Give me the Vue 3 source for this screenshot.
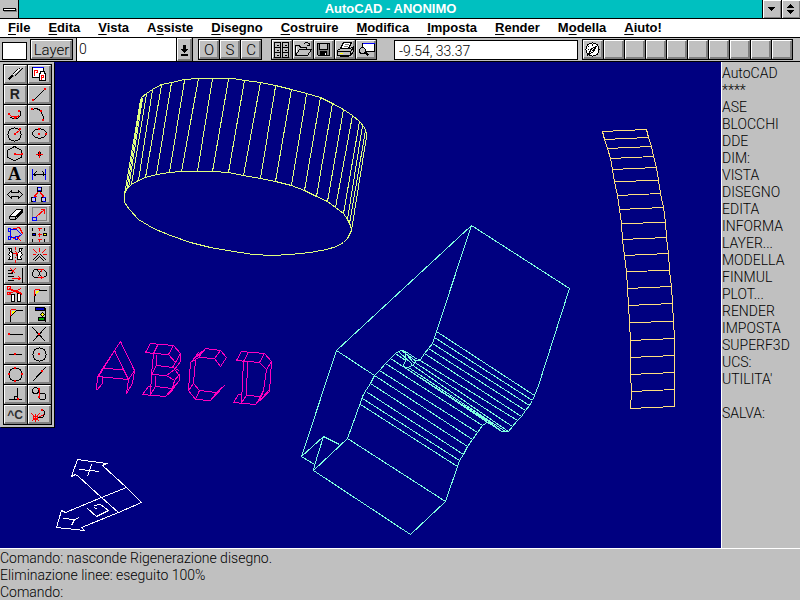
<script setup>
import { ref } from 'vue'

const menus = [
  ['', 'F', 'ile'], ['', 'E', 'dita'], ['', 'V', 'ista'], ['A', 's', 'siste'], ['', 'D', 'isegno'],
  ['', 'C', 'ostruire'], ['', 'M', 'odifica'], ['', 'I', 'mposta'], ['', 'R', 'ender'],
  ['M', 'o', 'della'], ['', 'A', 'iuto!']
]

const screenMenu = [
  'AutoCAD', '****', 'ASE', 'BLOCCHI', 'DDE', 'DIM:', 'VISTA', 'DISEGNO', 'EDITA', 'INFORMA',
  'LAYER...', 'MODELLA', 'FINMUL', 'PLOT...', 'RENDER', 'IMPOSTA', 'SUPERF3D', 'UCS:', "UTILITA'", '', 'SALVA:'
]

const layer = ref('0')
const coords = ref('-9.54, 33.37')
const command = ref('')

const K = '#000', R = '#f00', B = '#00f', W = '#fff', G = '#808080', Y = '#ff0', N = '#c0c0c0'

// Icons are drawn in thirds of a pixel; centre() moves a coordinate to the middle of its pixel.
const centre = n => Math.floor(n / 3) * 3 + 1.5
const s = (d, c = K, f = 'none', w = 3) => ({
  d: /[a-y]/.test(d) ? d : d.replace(/\d+/g, n => centre(Number(n))), c, f, w
})
const dot = (x, y, c = R) => s(`M${Math.round(x / 3) * 3 - 3} ${Math.round(y / 3) * 3 - 3}h6v6h-6z`, 'none', c)
const ring = (x, y, rx, ry = rx) => `M${centre(x) - rx} ${centre(y)}a${rx} ${ry} 0 1 0 ${rx * 2} 0a${rx} ${ry} 0 1 0 ${-rx * 2} 0z`

const palette = [
  { name: 'Ridisegna', art: [s('M12 43L27 28', K, 'none', 6), s('M24 27L48 6M30 33L54 9'), s('M27 27L51 6', W), s('M30 30L51 9', G), s('M24 27L30 36', G)] },
  { name: 'Oggetti', art: [s('M13 7H46V37H13z', K, W), s('M13 7H46', B), s('M20 31V16H28V23H21', R), s('M34 24H52V45H34z', K, W), s('M36 24V20H50V24', K, W), s('M40 42V31H47V37H41', R)] },
  { name: 'Ripeti', text: 'R', cls: 'glyph-r', x: 17, y: 43 },
  { name: 'Linea', art: [s('M15 45L52 11'), dot(15, 45), dot(52, 11)] },
  { name: 'Polilinea', art: [s('M18 36L27 41H39L49 32V23L45 17'), s('M15 28L21 35H34M34 38L46 30', R), dot(16, 28), dot(45, 17), dot(34, 38)] },
  { name: 'Arco', art: [s('M13 12Q31 8 38 20Q46 28 46 46'), dot(13, 12), dot(38, 17), dot(46, 46)] },
  { name: 'Cerchio', art: [s(ring(32, 27, 20)), s('M32 27L48 12', R), dot(32, 27), dot(48, 12)] },
  { name: 'Ellisse', art: [s(ring(33, 26, 21, 14)), dot(33, 26), dot(54, 26), dot(33, 12)] },
  { name: 'Poligono', art: [s('M31 5L51 15V37L31 47L11 37V15z'), s('M31 27H51', R), dot(32, 28), dot(53, 28)] },
  { name: 'Punto', art: [s('M33 20L39 27L33 34L27 27z'), s('M22 27H44M33 16V38', R)] },
  { name: 'Testo', text: 'A', cls: 'glyph-a', x: 12, y: 46 },
  { name: 'Dimensione', art: [s('M13 10V43M53 10V43', B), s('M15 27H51M24 20L17 27L24 34M42 20L49 27L42 34')] },
  { name: 'Estendi', art: [s('M10 27L22 15V21H44V15L56 27L44 39V33H22V39z')] },
  { name: 'Copia', art: [s('M32 18L19 33M34 18L46 33M19 27V33H26M46 27V33H40', R), s(ring(33, 12, 7), K, '#c0c0ff'), s('M27 7H37M27 17H37', B), s(ring(17, 43, 7), K, '#c0c0ff'), s('M12 38H22M12 48H22', B), s(ring(47, 43, 7), K, '#c0c0ff'), s('M42 38H52M42 48H52', B)] },
  { name: 'Cancella', art: [s('M15 33L36 12H54L34 33z', K, W), s('M15 33V40L18 43H33L54 21V12', K), s('M34 33V42'), s('M37 37L52 20', K, 'none', 6)] },
  { name: 'Scala', art: [s('M13 34V7H54V45H26', G), s('M13 36H24V46H13z', B), s('M25 34L48 14M38 14H48V24', R)] },
  { name: 'Modifica polilinea', art: [s('M18 14L45 8L54 24L38 42L18 33z', R), s('M18 14H36L51 27L36 38H18z', B), s('M12 10H20V18H12zM12 34H20V42H12zM33 34H41V42H33z', B, N), s('M40 38L51 50', R)] },
  { name: 'Serie', art: [s('M14 7V15M14 40V48M50 7V15M50 40V48', K), s('M12 24H21V32H12z', K, B), s('M45 24H54V32H45z', K, Y), s('M27 11H39M33 6V17M27 28H39M33 22V34M27 44H39M33 39V50', R)] },
  { name: 'Specchio', art: [s('M13 10H21V20L26 25V44H14L18 35L13 28L18 20z', K, W), s('M54 10H46V20L41 25V44H53L49 35L54 28L49 20z', K, W), s('M33 5V12M33 15V20M33 33V38M33 42V52', R), s('M25 25H41M37 20V30', R)] },
  { name: 'Esplodi', art: [s('M12 45L30 27M18 49L33 33M54 45L36 27M48 49L33 33'), s('M15 12L27 24M51 12L39 24M33 6V18M12 28H22M54 28H44', R)] },
  { name: 'Stira', art: [s('M11 15H24V24H11M11 33H27M11 45H27'), s('M54 7V51'), s('M18 9L34 25M34 9L18 25', R), s('M21 39H48M42 33L48 39L42 45M42 36V42', R)] },
  { name: 'Sposta', art: [s('M20 14H45L54 21V30L45 36H20L12 30V21z'), s('M27 15L33 22V29L27 35M39 15L33 22M39 35L33 29'), s('M27 14H45M40 9V19M27 36H45M40 31V41', R)] },
  { name: 'Taglia', art: [s('M22 27H31V48H22zM41 24H50V48H41z', K, W), s('M15 9L54 24M15 24L51 9M15 12L54 27', R), s('M10 5H18V12H10zM10 21H18V28H10z', R)] },
  { name: 'Raccorda', art: [s('M19 49V36Q24 18 36 16H54'), s('M19 14H33M19 14V30', R), s('M22 18H30M22 21H27M22 24H25', Y)] },
  { name: 'Cima', art: [s('M19 49V34L36 16H54'), s('M19 14H33M19 14V30', R), s('M22 18H30M22 21H27M22 24H25', Y)] },
  { name: 'Proprietà', art: [s('M51 6V49'), s('M21 7H49V15H21z', K, '#0000c0'), s('M42 21L48 27L42 33L36 27z', K, Y), s('M30 38H49V45H30z', K, '#00a000')] },
  { name: 'Fine', art: [s('M15 28H54'), dot(15, 28)] },
  { name: 'Intersezione', art: [s('M13 7L53 48M53 7L13 48'), dot(33, 27)] },
  { name: 'Medio', art: [s('M13 28H53'), dot(33, 28)] },
  { name: 'Centro', art: [s(ring(33, 27, 20)), dot(34, 28)] },
  { name: 'Quadrante', art: [s(ring(33, 27, 20)), dot(34, 8), dot(15, 28), dot(54, 28), dot(34, 48)] },
  { name: 'Vicino', art: [s('M12 48L53 7'), dot(43, 18)] },
  { name: 'Perpendicolare', art: [s('M13 43H53M39 8V43M30 43V33H39'), dot(42, 42)] },
  { name: 'Tangente', art: [s(ring(22, 15, 9)), s(ring(43, 35, 10)), s('M33 13V36', R), dot(33, 12), dot(33, 37)] },
  { name: 'Annulla', text: '^C', cls: 'glyph-c', x: 10, y: 42 },
  { name: 'Nessuno', art: [s('M39 12L50 19V27L42 38H27'), s('M10 25L33 48M33 25L10 48M21 24V50', R), s('M34 33L48 28', R), dot(42, 15), s('M15 33H27V42H15z', R)] }
]

const toolButtons = [
  { name: 'Blocchi', art: [s('M6 8H24V21H6zM6 23H24V36H6zM6 38H24V51H6zM30 8H48V21H30zM30 23H48V36H30zM30 38H48V51H30z', K, N), s('M12 15H18M36 15H42M12 30H18M36 30H42M12 45H18M36 45H42')] },
  { name: 'Apri', art: [s('M6 45V15H18L21 21H39V27'), s('M6 45L18 27H54L42 45z', K, N), s('M30 12L36 6H42L48 12M48 6V15H39'), s('M9 18V33', W)] },
  { name: 'Salva', art: [s('M9 9H46V46H12L9 43z', K, G), s('M15 9H39V27H15z', K, N), s('M18 33H37V46H18z', K, K), s('M33 37V43', W)] },
  { name: 'Stampa', art: [s('M15 24L24 6H48L39 24z', K, W), s('M27 12H41M24 18H38', G), s('M6 30L15 24H45L54 18V33L45 45H6z', K, N), s('M6 33H45V45M45 33L54 21'), s('M12 39H21', Y), s('M12 48H39', K)] },
  { name: 'Zoom', art: [s('M18 9H54V33H18z', K, W), s('M18 9H54', B), s(ring(19, 31, 9), K, N), s('M27 37L36 46', K, 'none', 6)] }
]

const compass = [
  s(ring(27, 29, 20), K, W), s('M15 15V18M12 29H15M15 42H18M27 45V48M39 15V18M45 29H42M39 42H36M27 10V15', K),
  s('M39 18L30 33L15 42L24 24z', K, W), s('M39 18L24 33')
]

// Plots digitised in thirds of a pixel: every vertex lands on a pixel centre.
const plot = (ox, oy, lines) => lines.map(l => 'M' + l.split(' ').map(p => {
  const [x, y] = p.split(',').map(Number)
  return `${ox + Math.floor(x / 3) + 0.5} ${oy + Math.floor(y / 3) + 0.5}`
}).join('L')).join('')

const ladderLeft = '38,35 44,58 52,85 62,115 68,148 74,184 82,226 89,268 95,310 98,357 104,406 110,454 113,505 116,556 119,607 122,661 122,712 122,763 125,814 122,865'
const ladderRight = '170,28 175,52 184,79 190,109 199,142 205,181 211,220 220,262 226,307 229,352 235,400 238,451 244,499 247,550 250,604 253,655 253,706 253,757 253,808 253,859'
const rightSteps = ladderRight.split(' ')
const ladder = [ladderLeft, ladderRight, ...ladderLeft.split(' ').map((p, i) => `${p} ${rightSteps[i]}`)]

const cylinder = [
  '92,112 90,105 95,97 110,85 128,72 155,59 185,52 222,43 265,40 307,40 370,41 403,47 451,53 497,62 545,72 590,86 630,98 667,116 699,133 727,150 749,169 762,188 770,205 770,220',
  '43,400 43,388 48,372 63,357 84,347 107,337 140,327 178,321 215,319 262,319 307,319 355,322 401,331 450,341 497,349 543,360 582,377 620,394 651,409 677,426 700,445 713,464 720,480 723,495 722,503 712,520 700,532 680,543 650,553 600,563 540,569 487,570 430,567 370,560 300,547 240,531 180,511 130,489 85,462 57,432 43,412 43,400',
  '90,107 44,388', '95,99 48,378', '96,99 54,370', '110,88 63,357', '128,72 84,347', '155,60 107,337', '185,52 140,327',
  '222,45 178,321', '265,40 215,319', '307,40 262,319', '354,42 307,319', '403,47 355,322', '451,53 401,331',
  '497,63 450,341', '543,72 497,349', '588,87 543,360', '630,98 582,377', '667,116 620,394', '699,133 651,409',
  '727,150 677,426', '749,170 700,445', '758,182 713,464', '765,195 718,474', '770,215 723,495'
]

const solid = [
  '544,32 139,407 34,724', '544,32 838,219 745,510 733,540 727,557 718,570 706,587 695,603 682,617 668,635 655,648 645,650 635,648 620,637 594,618',
  '544,32 440,350 434,367 427,384 416,400 404,416 392,432 380,437 370,448 355,457 343,457 340,450 347,435 346,410 335,405 325,409 315,415 300,430 285,446 268,465 253,482 240,505 229,523 218,543 212,563 172,671',
  '139,407 253,482', '346,408 383,433', '335,405 380,440', '325,409 368,448', '315,415 347,437', '348,418 372,446',
  '300,430 594,618', '285,446 577,632', '268,465 561,652', '253,482 546,673', '240,505 533,694', '231,531 521,717', '218,549 508,735', '212,567 502,753',
  '440,350 733,540', '434,367 727,557', '427,384 718,570', '416,400 706,587', '404,416 695,603', '385,432 682,617', '378,444 668,635', '365,448 655,648', '355,457 645,650', '343,457 635,648',
  '594,618 577,632 561,652 546,673 533,694 521,717 508,735 502,753 467,859 361,958 69,767 172,671 467,859',
  '34,724 99,663 148,688', '99,663 73,750 69,767', '34,724 72,749'
]

const letters = [
  '154,181 157,138 226,35 267,121 263,160 245,190 249,148 157,138', '209,60 173,115 235,118 209,60', '209,60 160,138', '235,118 249,148 267,121', '173,140 173,160 154,181',
  '324,69 302,67 317,40 386,46 407,71 406,95 388,118 404,135 404,152 361,200 293,193 310,169 318,169', '338,45 324,69 370,74 386,46', '370,74 392,97 407,71',
  '324,69 318,133 316,193 331,170', '333,74 335,105 382,113 392,97', '335,105 318,133 365,137 388,118', '382,113 402,122', '331,136 331,170 383,175 388,152 365,137', '388,152 404,132', '361,200 383,175 404,152', '367,195 388,172',
  '527,60 480,54 443,90 437,96 430,182 452,208 497,212 539,166', '527,60 545,83 527,110 508,86 527,60', '508,86 461,82 480,54', '461,82 443,95', '452,90 445,160 463,182 515,186 539,166', '463,182 452,208', '445,160 430,182', '515,186 497,212', '461,68 443,90',
  '575,92 589,64 659,70 680,95 672,183 630,223 566,217 581,194 588,194', '575,92 643,97 659,70', '610,66 596,94 588,218 604,195', '643,97 663,119 680,95', '663,119 656,180 648,200 604,195 607,97', '648,200 630,223', '651,203 672,178', '656,180 636,218'
]

const ucs = [
  '98,388 185,401 173,407 243,472 290,516 219,547 110,592 118,600 33,591 48,540 62,547 170,503 99,438 90,432 80,440 98,388',
  '243,472 170,503 219,547', '104,418 164,424', '139,403 127,440', '55,566 87,569 104,563', '87,569 79,587',
  '127,535 153,559 189,542 166,522 148,526', '148,532 158,539'
]

const drawing = [
  { name: 'cylinder', d: plot(110, 65, cylinder) },
  { name: 'ladder', d: plot(590, 120, ladder) },
  { name: 'solid', d: plot(290, 215, solid) },
  { name: 'letters', d: plot(45, 330, letters) },
  { name: 'ucs', d: plot(45, 330, ucs) }
]
</script>

<template>
  <div class="window">
    <header class="title">
      <button class="sysmenu" aria-label="Menu di controllo"><span class="sysbar"></span></button>
      <h1>AutoCAD - ANONIMO</h1>
      <button class="winbtn" aria-label="Riduci"><svg width="18" height="18" viewBox="0 0 18 18"><path d="M5 7H12L8.500 11z" /></svg></button>
      <button class="winbtn" aria-label="Ripristina"><svg width="18" height="18" viewBox="0 0 18 18"><path d="M5 8H12L8.500 4zM5 10H12L8.500 14z" /></svg></button>
    </header>

    <nav class="menubar">
      <a v-for="m in menus" :key="m.join('')" href="#">{{ m[0] }}<u>{{ m[1] }}</u>{{ m[2] }}</a>
    </nav>

    <div class="toolbar">
      <button class="swatch" aria-label="Colore"></button>
      <div class="group layer"><button class="cell">Layer</button></div>
      <div class="combo">
        <input v-model="layer" aria-label="Layer corrente" />
        <button class="cell" aria-label="Elenco layer"><svg width="15" height="21" viewBox="0 0 15 21"><path d="M6 6h3v4h3l-4.500 4L3 10h3zM4 15h7v2H4z" /></svg></button>
      </div>
      <div class="group modes">
        <button v-for="c in ['O', 'S', 'C']" :key="c" class="cell">{{ c }}</button>
      </div>
      <div class="group files">
        <button v-for="b in toolButtons" :key="b.name" class="cell" :aria-label="b.name">
          <svg class="ico" viewBox="0 0 60 57"><path v-for="(p, i) in b.art" :key="i" :d="p.d" :stroke="p.c" :fill="p.f" :stroke-width="p.w" /></svg>
        </button>
      </div>
      <input v-model="coords" class="coords" aria-label="Coordinate" />
      <div class="group spare">
        <button class="cell" aria-label="Vista aerea">
          <svg class="ico" viewBox="0 0 60 57"><path v-for="(p, i) in compass" :key="i" :d="p.d" :stroke="p.c" :fill="p.f" :stroke-width="p.w" /></svg>
        </button>
        <button v-for="n in 9" :key="n" class="cell" :aria-label="'Strumento ' + n"></button>
      </div>
    </div>

    <main class="work">
      <section class="canvas">
        <svg class="drawing" viewBox="0 62 721 486" preserveAspectRatio="xMinYMin meet" role="img" aria-label="Disegno">
          <path v-for="p in drawing" :key="p.name" :class="p.name" :d="p.d" />
        </svg>
        <div class="palette">
          <button v-for="t in palette" :key="t.name" class="cell" :aria-label="t.name">
            <svg class="ico" viewBox="0 0 69 57">
              <path v-for="(p, i) in t.art" :key="i" :d="p.d" :stroke="p.c" :fill="p.f" :stroke-width="p.w" />
              <text v-if="t.text" :class="t.cls" :x="t.x" :y="t.y">{{ t.text }}</text>
            </svg>
          </button>
        </div>
      </section>
      <aside class="screenmenu">
        <template v-for="(m, i) in screenMenu" :key="i">
          <button v-if="m">{{ m }}</button>
          <span v-else class="blank"></span>
        </template>
      </aside>
    </main>

    <footer class="command">
      <p>Comando: nasconde Rigenerazione disegno.</p>
      <p>Eliminazione linee: eseguito 100%</p>
      <div class="prompt"><label for="cmd">Comando:</label><input id="cmd" v-model="command" autocomplete="off" /></div>
    </footer>
  </div>
</template>

<style>
body { margin: 0; overflow: hidden; }
</style>

<style scoped>
* { box-sizing: border-box; }
.window {
  display: flex; flex-direction: column; height: 100vh; overflow: hidden;
  background: #c0c0c0; color: #000;
  font: 300 14px/17px Roboto, "Liberation Sans", sans-serif;
}
button { margin: 0; padding: 0; border: 0; background: #c0c0c0; color: inherit; font: inherit; }
input { min-width: 0; margin: 0; border: 0; border-radius: 0; outline: 0; background: #fff; color: inherit; font: inherit; }
svg { display: block; shape-rendering: crispEdges; }

.title { display: flex; flex: none; height: 19px; border-bottom: 1px solid #000; background: #00c0c0; }
.title h1 { flex: 1; margin: 0; color: #fff; text-align: center; font: bold 13px/18px "Liberation Sans", sans-serif; }
.sysmenu { display: flex; align-items: center; justify-content: center; width: 19px; border-right: 1px solid #000; }
.sysbar { width: 13px; height: 3px; border: 1px solid #000; background: #fff; box-shadow: 1px 1px #808080; }
.winbtn { width: 19px; border-left: 1px solid #000; box-shadow: inset 1px 1px #fff, inset -1px -1px #808080; }
.winbtn svg { width: 18px; }

.menubar {
  display: flex; flex: none; gap: 18px; height: 19px; padding-left: 8px;
  border-bottom: 1px solid #000; background: #fff; font: bold 13px/18px "Liberation Sans", sans-serif;
}
.menubar a { color: #000; text-decoration: none; }
.menubar u { text-underline-offset: 2px; }

.toolbar { display: flex; flex: none; align-items: flex-start; height: 24px; border-bottom: 1px solid #000; }
.cell {
  flex: none; width: 20px; height: 19px;
  border: 1px solid; border-color: #fff #808080 #808080 #fff;
  box-shadow: inset -1px -1px #808080;
}
.ico { margin: -1px; overflow: visible; fill: none; }
.cell .ico { width: calc(100% + 2px); height: calc(100% + 2px); }
.group { display: flex; flex: none; gap: 1px; margin-top: 1px; padding: 1px; background: #000; }
.swatch { flex: none; width: 25px; height: 18px; margin: 4px 3px 0 2px; border: 1px solid #000; background: #fff; }
.layer { margin-right: 3px; }
.layer .cell { width: 41px; font-size: 15px; line-height: 16px; }
.combo { display: flex; flex: none; width: 117px; height: 23px; margin-right: 5px; border: solid #000; border-width: 0 1px; }
.combo input { flex: 1; padding: 0 2px; border-right: 1px solid #000; }
.combo .cell { width: 15px; height: 23px; }
.combo svg { margin: 0 -1px; }
.modes { margin-right: 9px; font-size: 15px; line-height: 16px; }
.files { margin-right: 17px; }
.coords { flex: 1; height: 20px; margin: 2px 4px 0 0; padding: 2px 4px 0; border: 1px solid #000; }
.spare { margin-right: 7px; }

.work { display: flex; flex: 1; min-height: 0; }
.canvas { position: relative; flex: 1; min-width: 0; background: #000080; }
.drawing { width: 100%; height: 100%; fill: none; stroke-width: 1; }
.cylinder { stroke: #dfff7f; }
.ladder { stroke: #ffdf7f; }
.solid { stroke: #7fffdf; }
.letters { stroke: #ff00bf; }
.ucs { stroke: #fff; }

.palette {
  position: absolute; top: 0; left: 0; display: grid; grid-template-columns: 23px 23px; gap: 1px;
  padding: 1px; background: #000; border: solid #c0c0c0; border-width: 2px 2px 2px 3px;
  box-shadow: 1px 1px #000;
}
.palette .cell { width: 23px; }
.glyph-r { font: bold 42px "Liberation Sans", sans-serif; fill: #202020; }
.glyph-a { font: bold 54px "Liberation Serif", serif; fill: #000; }
.glyph-c { font: bold 36px "Liberation Sans", sans-serif; fill: #303030; }

.screenmenu { display: flex; flex: none; flex-direction: column; width: 79px; padding-top: 3px; border-left: 1px solid #fff; overflow: hidden; }
.screenmenu button { flex: none; height: 17px; text-align: left; white-space: nowrap; }
.blank { flex: none; height: 17px; }

.command { flex: none; height: 52px; border-top: 1px solid #fff; padding-top: 1px; overflow: hidden; }
.command p { margin: 0; }
.prompt { display: flex; gap: 4px; }
.prompt input { flex: 1; height: 17px; padding: 0; background: transparent; }
</style>
